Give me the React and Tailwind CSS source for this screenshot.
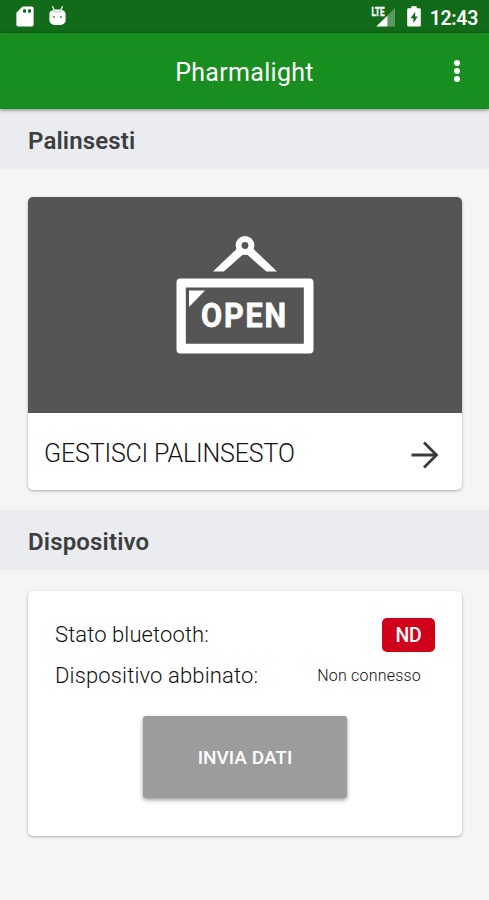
import React, { useState } from "react";

const SdCardIcon = () => (
  <svg className="h-[21px] w-[18px]" viewBox="0 0 18 21">
    <path
      d="M6.5 .4H15.6a2 2 0 0 1 2 2v16a2 2 0 0 1-2 2H2.4a2 2 0 0 1-2-2V6.8z"
      fill="#fff"
    />
    <rect x="7" y="3.2" width="3" height="3.6" rx="1" fill="#126b19" />
    <rect x="12" y="3.2" width="3" height="3.6" rx="1" fill="#126b19" />
  </svg>
);

const AndroidIcon = () => (
  <svg className="h-[20px] w-[17px]" viewBox="0 0 17 20">
    <path d="M3.6.6 5.2 4M13.4.6l-1.6 3.4" stroke="#dcebdd" strokeWidth="1.3" strokeLinecap="round" />
    <path
      d="M.4 8.4C.4 5 3.6 3.6 8.5 3.6s8.1 1.4 8.1 4.8V14a5 5 0 0 1-5 5H5.4A5 5 0 0 1 .4 14z"
      fill="#fff"
    />
    <path d="M3.8 5Q8.5 7.6 13.2 5" stroke="#8fbb92" strokeWidth="0.8" fill="none" />
    <circle cx="5" cy="11" r="1" fill="#4d8f52" />
    <circle cx="12" cy="11" r="1" fill="#4d8f52" />
  </svg>
);

const SignalIcon = () => (
  <svg className="h-[21px] w-[26px]" viewBox="0 0 26 21">
    <path d="M25 2V20.5H17.5V9.500z" fill="#5a9a5f" />
    <path d="M17.5 9.500V20.5H6.2z" fill="#fff" />
    <text
      x="1.5"
      y="9.700"
      fill="#fff"
      stroke="#fff"
      strokeWidth="0.4"
      fontSize="12"
      fontWeight="700"
      fontFamily="Roboto, sans-serif"
      textLength="13"
      lengthAdjust="spacingAndGlyphs"
    >
      LTE
    </text>
  </svg>
);

const BatteryIcon = () => (
  <svg className="h-[21px] w-[14px]" viewBox="0 0 14 21">
    <path
      d="M4.3 .3h5.4v2H12.5A1.3 1.3 0 0 1 13.8 3.600v15.6a1.3 1.3 0 0 1-1.3 1.3h-11A1.3 1.3 0 0 1 .2 19.200V3.600A1.3 1.3 0 0 1 1.5 2.300h2.8z"
      fill="#fff"
    />
    <path d="M8.3 5.8 3.4 12.2h3v4.8L10.8 10.600H8z" fill="#126b19" />
  </svg>
);

const OpenSign = () => (
  <svg className="h-[120px] w-[140px]" viewBox="0 0 140 120" fill="none">
    <path d="M61.5 14 38 36.5H48.8L68 19.5H72L91.4 36.5H102L78.5 14z" fill="#fff" />
    <circle cx="70" cy="10.5" r="6.4" fill="#555" stroke="#fff" strokeWidth="6" />
    <path
      d="M5.5 43.5h129a4 4 0 0 1 4 4v67a4 4 0 0 1-4 4h-129a4 4 0 0 1-4-4v-67a4 4 0 0 1 4-4zM10.8 52.500V108.800h118V52.500z"
      fill="#fff"
      fillRule="evenodd"
    />
    <path d="M14 55.500H30L14 72z" fill="#fff" />
    <text
      transform="translate(26 92) scale(0.9 1)"
      fill="#fff"
      stroke="#fff"
      strokeWidth="0.8"
      fontSize="34"
      fontWeight="700"
      fontFamily="Roboto, sans-serif"
      letterSpacing="2"
    >
      OPEN
    </text>
  </svg>
);

const ArrowIcon = () => (
  <svg className="mt-[7px] h-[28px] w-[28px]" viewBox="0 0 28 28">
    <path d="M0.5 14H26M13 1.500 25.500 14 13 26.500" fill="none" stroke="#3a3a3a" strokeWidth="2.800" />
  </svg>
);

const StatusBar = () => (
  <div className="flex h-[33px] items-start justify-between bg-[#126b19] pt-1.5 pl-4 pr-[11px]">
    <div className="flex gap-[15px]">
      <SdCardIcon />
      <AndroidIcon />
    </div>
    <div className="flex">
      <SignalIcon />
      <div className="ml-[11px]">
        <BatteryIcon />
      </div>
      <span className="ml-[9px] text-[19.5px] leading-[25px] font-semibold tracking-[-0.3px] text-white">
        12:43
      </span>
    </div>
  </div>
);

const SectionTitle = ({ children }) => (
  <h2 className="flex h-[60px] items-center bg-[#ebecf0] px-7 pt-[3px] text-[24px] font-semibold tracking-[0.15px] text-[#3d3e40]">
    {children}
  </h2>
);

const App = () => {
  const [connected] = useState(false);

  return (
    <div className="flex h-[900px] w-[489px] flex-col overflow-hidden bg-[#f5f5f5] font-[Roboto,sans-serif]">
      <StatusBar />

      <header className="relative flex h-[76px] items-center bg-[#188e20] pt-[3px] shadow-[0_1px_4px_rgba(0,0,0,0.45)]">
        <h1 className="w-full text-center text-[25px] tracking-[0.3px] text-white">Pharmalight</h1>
        <button className="absolute top-[27px] right-[29px] flex flex-col gap-[2px]">
          <span className="h-1.5 w-1.5 rounded-full bg-white" />
          <span className="h-1.5 w-1.5 rounded-full bg-white" />
          <span className="h-1.5 w-1.5 rounded-full bg-white" />
        </button>
      </header>

      <SectionTitle>Palinsesti</SectionTitle>

      <div className="mx-7 mt-7 mb-5 w-[434px] overflow-hidden rounded-[5px] bg-white shadow-[0_1px_3px_rgba(0,0,0,0.3)]">
        <div className="flex h-[216px] justify-center bg-[#555] pt-[38px]">
          <OpenSign />
        </div>
        <div className="flex h-[77px] items-center justify-between pr-[23px] pl-4">
          <span className="pt-1 text-[25px] font-light tracking-[-0.17px] text-[#111]">
            GESTISCI PALINSESTO
          </span>
          <ArrowIcon />
        </div>
      </div>

      <SectionTitle>Dispositivo</SectionTitle>

      <div className="mx-7 mt-[21px] flex h-[245px] w-[434px] flex-col rounded-[5px] bg-white px-[27px] pt-[27px] shadow-[0_1px_3px_rgba(0,0,0,0.3)]">
        <div className="flex h-[34px] items-center justify-between">
          <span className="pb-0.5 text-[22px] font-light tracking-[0.1px] text-[#111]">Stato bluetooth:</span>
          <span className="flex h-[34px] w-[53px] items-center justify-center rounded-[5px] bg-[#d0021b] pt-0.5 text-[19.5px] font-medium tracking-[-0.2px] text-white">
            {connected ? "OK" : "ND"}
          </span>
        </div>
        <div className="mt-2 flex h-[32px] items-center justify-between pr-[14px]">
          <span className="pb-0.5 text-[22px] font-light tracking-[0.15px] text-[#111]">Dispositivo abbinato:</span>
          <span className="pb-px text-[16px] font-light tracking-[0.2px] text-[#111]">Non connesso</span>
        </div>
        <button className="mt-6 flex h-[82px] w-[204px] items-center justify-center self-center rounded-[3px] bg-[#9c9c9c] pt-0.5 text-[19px] font-medium text-white shadow-[0_2px_4px_rgba(0,0,0,0.4)]">
          INVIA DATI
        </button>
      </div>
    </div>
  );
};

export default App;
